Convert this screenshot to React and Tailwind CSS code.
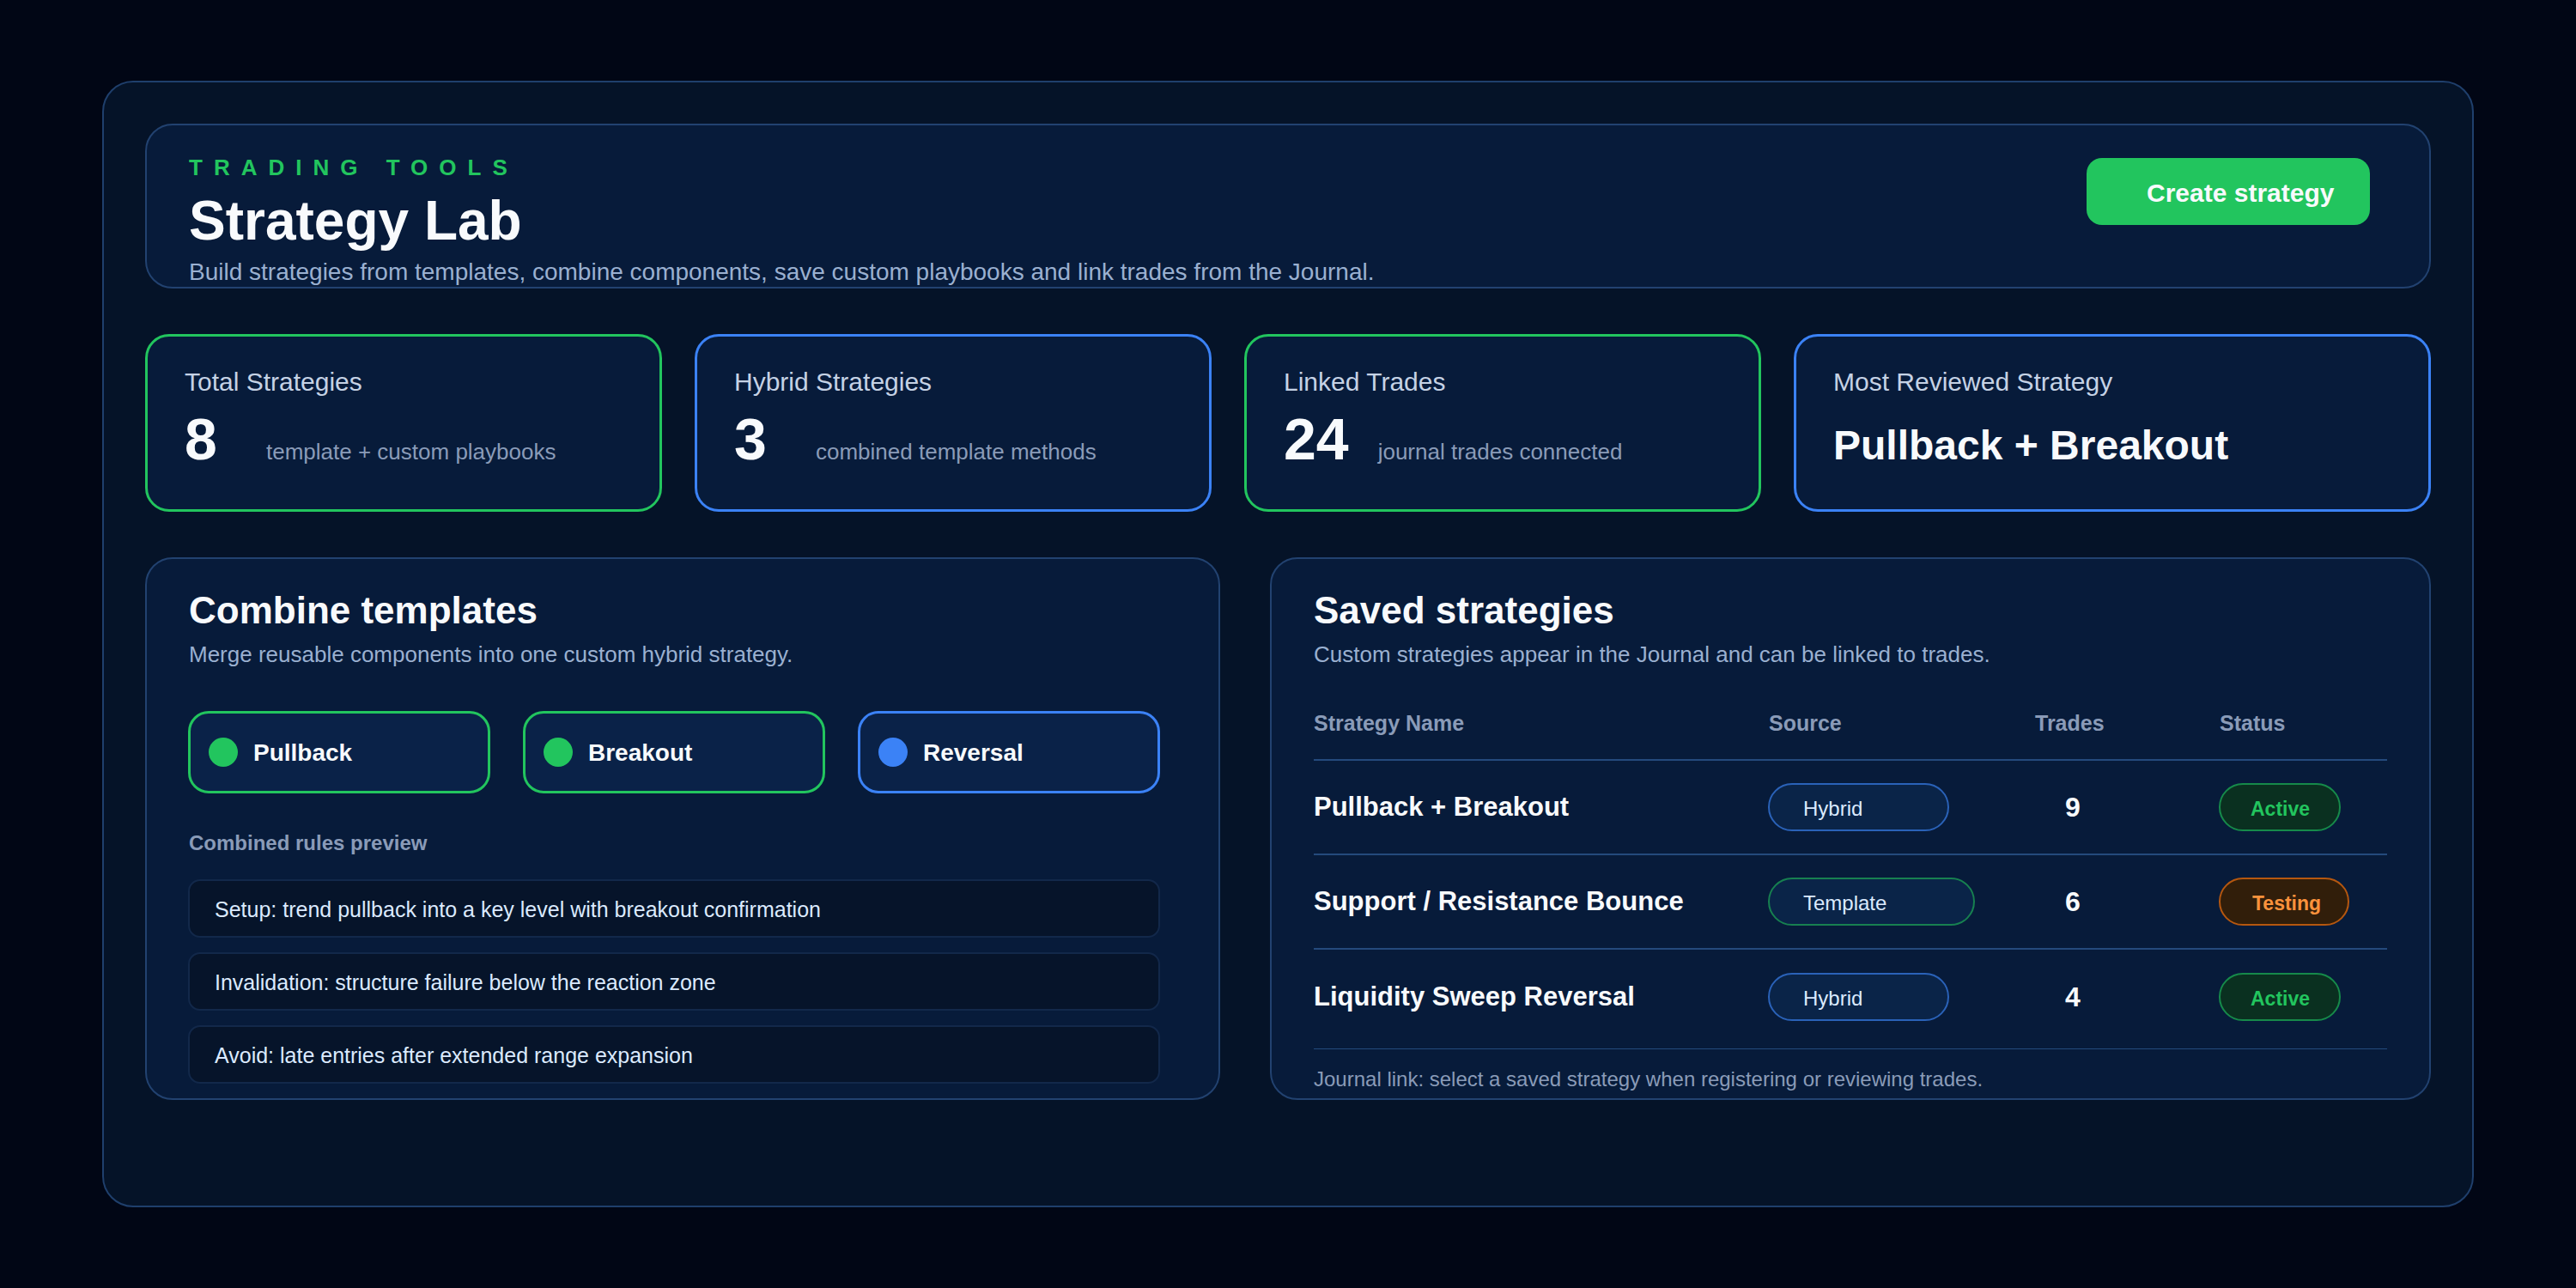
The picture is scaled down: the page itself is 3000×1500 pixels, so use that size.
const stats = [
  { label: 'Total Strategies', value: '8', note: 'template + custom playbooks', border: 'border-[#22c55e]' },
  { label: 'Hybrid Strategies', value: '3', note: 'combined template methods', border: 'border-[#3b82f6]' },
  { label: 'Linked Trades', value: '24', note: 'journal trades connected', border: 'border-[#22c55e]' },
];

const chips = [
  { label: 'Pullback', border: 'border-[#22c55e]', dot: 'bg-[#22c55e]' },
  { label: 'Breakout', border: 'border-[#22c55e]', dot: 'bg-[#22c55e]' },
  { label: 'Reversal', border: 'border-[#3b82f6]', dot: 'bg-[#3b82f6]' },
];

const rules = [
  'Setup: trend pullback into a key level with breakout confirmation',
  'Invalidation: structure failure below the reaction zone',
  'Avoid: late entries after extended range expansion',
];

const sourceStyles = {
  Hybrid: 'w-[211px] border-[#2a62b8]',
  Template: 'w-[241px] border-[#178050]',
};

const statusStyles = {
  Active: 'w-[142px] pl-[35px] border-[#168a4a] bg-[#0a3020] text-[#22c55e]',
  Testing: 'w-[152px] pl-[37px] border-[#b5570f] bg-[#311e0a] text-[#fb923c]',
};

const strategies = [
  { name: 'Pullback + Breakout', source: 'Hybrid', trades: 9, status: 'Active' },
  { name: 'Support / Resistance Bounce', source: 'Template', trades: 6, status: 'Testing' },
  { name: 'Liquidity Sweep Reversal', source: 'Hybrid', trades: 4, status: 'Active' },
];

const StatCard = ({ label, value, note, border }) => (
  <div className={`h-[207px] rounded-[28px] border-[3px] ${border} bg-[#071b3a] pl-[43px] pt-[33px]`}>
    <div className="text-[30px] leading-[40px] text-[#c5d2e5]">{label}</div>
    <div className="mt-[4px] flex items-end">
      <div className="min-w-[61px] text-[68px] font-bold leading-[84px] text-[#f8fafc]">{value}</div>
      <div className="ml-[34px] pb-[10px] text-[26px] leading-[34px] text-[#8a9bb8]">{note}</div>
    </div>
  </div>
);

const App = () => {
  return (
    <div className="h-[1500px] w-[3000px] bg-[#010615] pl-[119px] pt-[94px] font-['Liberation_Sans',Arial,sans-serif]">
      <div className="h-[1312px] w-[2762px] rounded-[36px] border-2 border-[#1f3f6c] bg-[#051328] px-[48px] pt-[48px]">
        {/* Header */}
        <div className="flex h-[192px] justify-between rounded-[32px] border-2 border-[#224270] bg-[#071b3a] pl-[49px] pr-[69px]">
          <div className="pt-[32px]">
            <div className="text-[26px] font-bold leading-[34px] tracking-[13px] text-[#22c55e]">TRADING TOOLS</div>
            <h1 className="mt-[6px] text-[64px] font-bold leading-[78px] text-[#f8fafc]">Strategy Lab</h1>
            <p className="mt-[3px] text-[28px] leading-[36px] text-[#9ab0d0]">
              Build strategies from templates, combine components, save custom playbooks and link trades from the Journal.
            </p>
          </div>
          <div className="mt-[38px] flex h-[78px] w-[330px] items-center rounded-[18px] bg-[#22c55e] pl-[70px] pt-[2px] text-[30px] font-bold text-[#f8fafc]">
            Create strategy
          </div>
        </div>

        {/* Stats */}
        <div className="mt-[53px] grid grid-cols-[602px_602px_602px_742px] gap-[38px]">
          {stats.map((s) => (
            <StatCard key={s.label} {...s} />
          ))}
          <div className="h-[207px] rounded-[28px] border-[3px] border-[#3b82f6] bg-[#071b3a] pl-[43px] pt-[33px]">
            <div className="text-[30px] leading-[40px] text-[#c5d2e5]">Most Reviewed Strategy</div>
            <div className="mt-[22px] text-[48px] font-bold leading-[64px] text-[#f8fafc]">Pullback + Breakout</div>
          </div>
        </div>

        <div className="mt-[53px] flex gap-[58px]">
          {/* Combine templates */}
          <div className="h-[632px] w-[1252px] rounded-[32px] border-2 border-[#224270] bg-[#071b3a] pl-[48px] pr-[68px] pt-[31px]">
            <h2 className="pl-px text-[44px] font-bold leading-[58px] text-[#f8fafc]">Combine templates</h2>
            <p className="mt-[4px] pl-px text-[26px] leading-[36px] text-[#9ab0d0]">Merge reusable components into one custom hybrid strategy.</p>
            <div className="mt-[48px] grid grid-cols-3 gap-[38px]">
              {chips.map((c) => (
                <div key={c.label} className={`flex h-[96px] items-center rounded-[24px] border-[3px] ${c.border} bg-[#0a2248] pl-[21px]`}>
                  <span className={`h-[34px] w-[34px] rounded-full ${c.dot}`} />
                  <span className="ml-[18px] pt-px text-[28px] font-bold text-[#f8fafc]">{c.label}</span>
                </div>
              ))}
            </div>
            <div className="mt-[42px] pl-px text-[24px] font-bold leading-[32px] text-[#8a9bb8]">Combined rules preview</div>
            <div className="mt-[26px] flex flex-col gap-[17px]">
              {rules.map((r) => (
                <div key={r} className="flex h-[68px] items-center rounded-[14px] border-2 border-[#12284a] bg-[#06142a] pl-[29px] pt-[3px] text-[25px] text-[#dbeafe]">
                  {r}
                </div>
              ))}
            </div>
          </div>

          {/* Saved strategies */}
          <div className="h-[632px] w-[1352px] rounded-[32px] border-2 border-[#224270] bg-[#071b3a] pl-[49px] pr-[49px] pt-[31px]">
            <h2 className="text-[44px] font-bold leading-[58px] text-[#f8fafc]">Saved strategies</h2>
            <p className="mt-[4px] text-[26px] leading-[36px] text-[#9ab0d0]">Custom strategies appear in the Journal and can be linked to trades.</p>
            <div className="mt-[46px] grid h-[60px] grid-cols-[530px_310px_215px_195px] border-b-2 border-[#244a7c] text-[25px] font-bold leading-[32px] text-[#8a9bb8]">
              <div>Strategy Name</div>
              <div>Source</div>
              <div>Trades</div>
              <div>Status</div>
            </div>
            {strategies.map((row, i) => (
              <div
                key={row.name}
                className={`grid h-[110px] grid-cols-[530px_310px_215px_195px] items-center ${i < 2 ? 'border-b-2 border-[#244a7c]' : ''}`}
              >
                <div className="text-[31px] font-bold text-[#f8fafc]">{row.name}</div>
                <div>
                  <span className={`-ml-px block h-[56px] rounded-[28px] border-2 bg-[#0a2448] pl-[39px] text-[24px] leading-[56px] text-[#dbeafe] ${sourceStyles[row.source]}`}>
                    {row.source}
                  </span>
                </div>
                <div className="pl-[35px] text-[32px] font-bold text-[#f8fafc]">{row.trades}</div>
                <div>
                  <span className={`-ml-px block h-[56px] rounded-[28px] border-2 text-[23px] font-bold leading-[56px] ${statusStyles[row.status]}`}>
                    {row.status}
                  </span>
                </div>
              </div>
            ))}
            <div className="mt-[5px] border-b border-[#244a7c]" />
            <p className="mt-[19px] text-[24px] leading-[32px] text-[#8a9bb8]">Journal link: select a saved strategy when registering or reviewing trades.</p>
          </div>
        </div>
      </div>
    </div>
  );
};

export default App;
